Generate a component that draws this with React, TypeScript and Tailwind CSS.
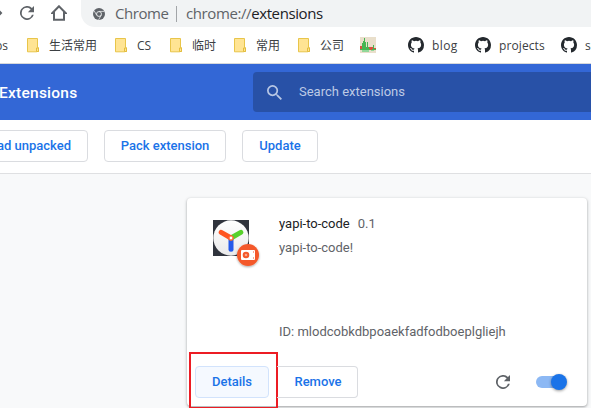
import type { ReactNode } from "react";

const chromeFont = "font-['Open_Sans','Noto_Sans_CJK_SC',sans-serif]";

function Folder() {
  return (
    <svg width="13" height="15" viewBox="0 0 13 15" className="shrink-0">
      <path d="M.5.5h10v9.2h1v3.8h-1.7v.3H.5z" fill="#ffe493" stroke="#e8c54a" />
      <path d="M9.5 13.5V10h2v3.5z" fill="#ffe493" stroke="#e3bd3e" />
    </svg>
  );
}

function Github() {
  return (
    <svg width="16" height="16" viewBox="0 0 16 16" className="shrink-0">
      <path
        fill="#24292e"
        d="M8 0C3.58 0 0 3.58 0 8c0 3.54 2.29 6.53 5.47 7.59.4.07.55-.17.55-.38 0-.19-.01-.82-.01-1.49-2.01.37-2.53-.49-2.69-.94-.09-.23-.48-.94-.82-1.13-.28-.15-.68-.52-.01-.53.63-.01 1.08.58 1.23.82.72 1.21 1.87.87 2.33.66.07-.52.28-.87.51-1.07-1.78-.2-3.64-.89-3.64-3.95 0-.87.31-1.59.82-2.15-.08-.2-.36-1.02.08-2.12 0 0 .67-.21 2.2.82a7.5 7.5 0 0 1 4 0c1.53-1.04 2.2-.82 2.2-.82.44 1.1.16 1.92.08 2.12.51.56.82 1.27.82 2.15 0 3.07-1.87 3.75-3.65 3.95.29.25.54.73.54 1.48 0 1.07-.01 1.93-.01 2.2 0 .21.15.46.55.38A8 8 0 0 0 16 8c0-4.42-3.58-8-8-8"
      />
    </svg>
  );
}

function Refresh({ className, color }: { className: string; color: string }) {
  return (
    <svg viewBox="0 0 16 16" className={className}>
      <path
        fill={color}
        d="M13.66 2.34A8 8 0 1 0 15.73 10h-2.08A6 6 0 1 1 8 2c1.66 0 3.14.69 4.22 1.78L9 7h7V0z"
      />
    </svg>
  );
}

function ChartIcon() {
  return (
    <svg width="16" height="16" viewBox="0 0 16 16" className="shrink-0">
      <path fill="#e9dfcb" d="M0 0h16v16H0z" />
      <path fill="#d6533d" d="M0 9h2v3H0zM8 10h5v3H8zM14 11h2v2h-2z" />
      <path fill="#45b653" d="M0 12h2V6h1V4h1V1h1v4h1v5h1V5h1v5h1v2h1v1h2v-1h1V8h1v4h2v1H0z" />
      <path fill="#91d799" d="M2 13h7v2H2zM11 13h3v1h-3z" />
    </svg>
  );
}

function Bookmark({ icon, label, className }: { icon: ReactNode; label: string; className: string }) {
  return (
    <div className={`flex shrink-0 items-center ${className}`}>
      {icon}
      <span className="pt-[2px]">{label}</span>
    </div>
  );
}

function ActionButton({ children, className }: { children: ReactNode; className: string }) {
  return (
    <button
      className={`flex h-8 shrink-0 items-center justify-center whitespace-nowrap rounded border text-[13px] font-medium text-[#1a73e8] ${className}`}
    >
      {children}
    </button>
  );
}

function BrowserBar() {
  return (
    <div className={`h-16 border-b border-[#d6d8db] bg-white ${chromeFont}`}>
      <div className="flex h-[27px]">
        <svg width="4" height="27" viewBox="0 0 4 27" className="shrink-0">
          <path d="m-4 8 5 5-5 5" fill="none" stroke="#5f6368" strokeWidth="2" />
        </svg>
        <Refresh className="ml-4 mt-[6px] h-[14px] w-[14px] shrink-0" color="#5f6368" />
        <svg width="16" height="16" viewBox="0 0 16 16" className="ml-[17px] mt-[5px] shrink-0">
          <path d="M8 1.3 1.4 8H3v6.8h10V8h1.6z" fill="none" stroke="#5f6368" strokeWidth="2" />
        </svg>
        <div className="ml-[14px] flex h-[27px] flex-1 items-center rounded-bl-[14px] bg-[#f1f3f4] pl-3 text-[15px] text-[#5f6368]">
          <svg width="12" height="12" viewBox="0 0 12 12" className="shrink-0">
            <circle cx="6" cy="6" r="6" fill="#5f6368" />
            <circle cx="6" cy="6" r="2.45" fill="#5f6368" stroke="#f1f3f4" strokeWidth=".9" />
            <path d="M6 3.4h5.3M3.7 7.2 1.1 2.7M8.2 7.2 5.6 11.8" stroke="#f1f3f4" strokeWidth=".75" />
          </svg>
          <span className="ml-[10px] w-[54px] whitespace-nowrap tracking-[-0.45px]">Chrome</span>
          <span className="ml-[7px] h-4 w-px bg-[#a2a5a8]" />
          <span className="ml-[9px] whitespace-nowrap tracking-[-0.4px]">
            chrome://<span className="text-[#202124]">extensions</span>
          </span>
        </div>
      </div>
      <div className="flex h-9 items-center overflow-hidden whitespace-nowrap text-[12px] text-[#3c4043]">
        <span className="flex w-[27px] shrink-0 pt-[2px]">
          <span className="-ml-[5px]">ps</span>
        </span>
        <Bookmark className="w-[88px] gap-[9px]" icon={<Folder />} label="生活常用" />
        <Bookmark className="w-[55px] gap-[9px]" icon={<Folder />} label="CS" />
        <Bookmark className="w-16 gap-[9px]" icon={<Folder />} label="临时" />
        <Bookmark className="w-16 gap-[9px]" icon={<Folder />} label="常用" />
        <Bookmark className="w-[62px] gap-[9px]" icon={<Folder />} label="公司" />
        <div className="w-12 shrink-0">
          <ChartIcon />
        </div>
        <Bookmark className="w-[67px] gap-2 tracking-[0.4px]" icon={<Github />} label="blog" />
        <Bookmark className="w-[86px] gap-2 tracking-[0.1px]" icon={<Github />} label="projects" />
        <Bookmark className="w-[60px] gap-2" icon={<Github />} label="source" />
      </div>
    </div>
  );
}

function ExtensionLogo() {
  return (
    <svg width="56" height="56" viewBox="0 0 56 56" className="shrink-0">
      <defs>
        <linearGradient id="disc" x2="0" y2="1">
          <stop stopColor="#fff" />
          <stop offset="1" stopColor="#e9e9ea" />
        </linearGradient>
        <filter id="badge-shadow" x="-30%" y="-30%" width="160%" height="170%">
          <feDropShadow dx="0" dy="1" stdDeviation="1" floodOpacity=".35" />
        </filter>
      </defs>
      <path fill="#30343d" d="M0 0h36v36H0z" />
      <circle cx="18" cy="18" r="17.7" fill="url(#disc)" />
      <g strokeWidth="5" strokeLinecap="round">
        <path d="M18 18v11.3" stroke="#2459ea" />
        <path d="m18 18 9.8-5.7" stroke="#57d12b" />
        <path d="m18 18-9.8-5.7" stroke="#ff541f" />
      </g>
      <circle cx="18" cy="18" r="2" fill="#fff" stroke="#ff6a38" strokeWidth="1.2" />
      <g filter="url(#badge-shadow)">
        <circle cx="35" cy="35" r="11" fill="#f4592b" />
      </g>
      <rect x="28" y="30" width="14" height="10" rx="1" fill="#fff" />
      <circle cx="33" cy="35" r="2.3" fill="#f9a58b" stroke="#f4592b" strokeWidth="2" />
      <path d="M40 31.5h1v1h-1zM40 37.5h1v1h-1z" fill="#f4592b" />
    </svg>
  );
}

function ExtensionCard() {
  return (
    <section className="ml-[187px] mt-6 flex h-[208px] w-[400px] flex-col rounded bg-white shadow-[0_1px_2px_rgba(60,64,67,0.3),0_1px_3px_1px_rgba(60,64,67,0.15)]">
      <div className="flex h-[160px] pl-[26px] pt-[22px]">
        <ExtensionLogo />
        <div className="ml-[10px] flex flex-col text-[13px] leading-5 text-[#5f6368]">
          <div className="-mt-[6px] flex gap-2">
            <span className="text-[#202124]">yapi-to-code</span>
            <span>0.1</span>
          </div>
          <div className="mt-1">yapi-to-code!</div>
          <div className="mt-16">ID: mlodcobkdbpoaekfadfodboeplgliejh</div>
        </div>
      </div>
      <div className="flex h-12 items-center pl-[2px]">
        <div className="-mt-[4px] flex h-[57px] w-[89px] shrink-0 items-center border-2 border-[#ec1c24] pl-1">
          <ActionButton className="mt-[3px] w-[74px] border-[#d2e3fc] bg-[#f5f9ff]">Details</ActionButton>
        </div>
        <ActionButton className="-ml-px w-[81px] rounded-l-none border-[#dadce0] border-l-0 pl-[2px]">
          Remove
        </ActionButton>
        <Refresh className="ml-[138px] h-[14px] w-[14px] shrink-0" color="#5f6368" />
        <div className="ml-[26px] flex h-3 w-[30px] items-center justify-end rounded-full bg-[#8cb8f4]">
          <span className="-mr-px h-4 w-4 shrink-0 rounded-full bg-[#1a73e8] shadow-[0_1px_3px_rgba(0,0,0,0.4)]" />
        </div>
      </div>
    </section>
  );
}

export default function App() {
  return (
    <div className="h-[408px] w-[591px] overflow-hidden bg-[#f8f9fa] font-[Roboto,sans-serif]">
      <BrowserBar />
      <header className="flex h-14 items-center bg-[#3367d6]">
        <h1 className="w-[253px] shrink-0 whitespace-nowrap pt-[3px] text-[15.5px] font-medium tracking-[0.25px] text-white">
          <span className="-ml-px">Extensions</span>
        </h1>
        <div className="flex h-10 flex-1 items-center rounded-l-sm bg-[#2851a7] pl-[14px]">
          <svg width="15" height="15" viewBox="3 3 17.5 17.5" className="shrink-0">
            <path
              fill="#b8c7e5"
              d="M15.5 14h-.79l-.28-.27A6.47 6.47 0 0 0 16 9.5 6.5 6.5 0 1 0 9.5 16c1.61 0 3.09-.59 4.23-1.57l.27.28v.79l5 4.99L20.49 19zm-6 0C7.01 14 5 11.99 5 9.5S7.01 5 9.5 5 14 7.01 14 9.5 11.99 14 9.5 14"
            />
          </svg>
          <span className="ml-[17px] text-[13px] text-[#bdcae5]">Search extensions</span>
        </div>
      </header>
      <nav className="flex h-[54px] gap-4 border-b border-[#dfe0e2] bg-white pt-[10px]">
        <ActionButton className="-ml-[37px] w-[125px] justify-end border-[#dadce0] pr-4">Load unpacked</ActionButton>
        <ActionButton className="w-[122px] border-[#dadce0]">Pack extension</ActionButton>
        <ActionButton className="w-[76px] border-[#dadce0]">Update</ActionButton>
      </nav>
      <ExtensionCard />
    </div>
  );
}
